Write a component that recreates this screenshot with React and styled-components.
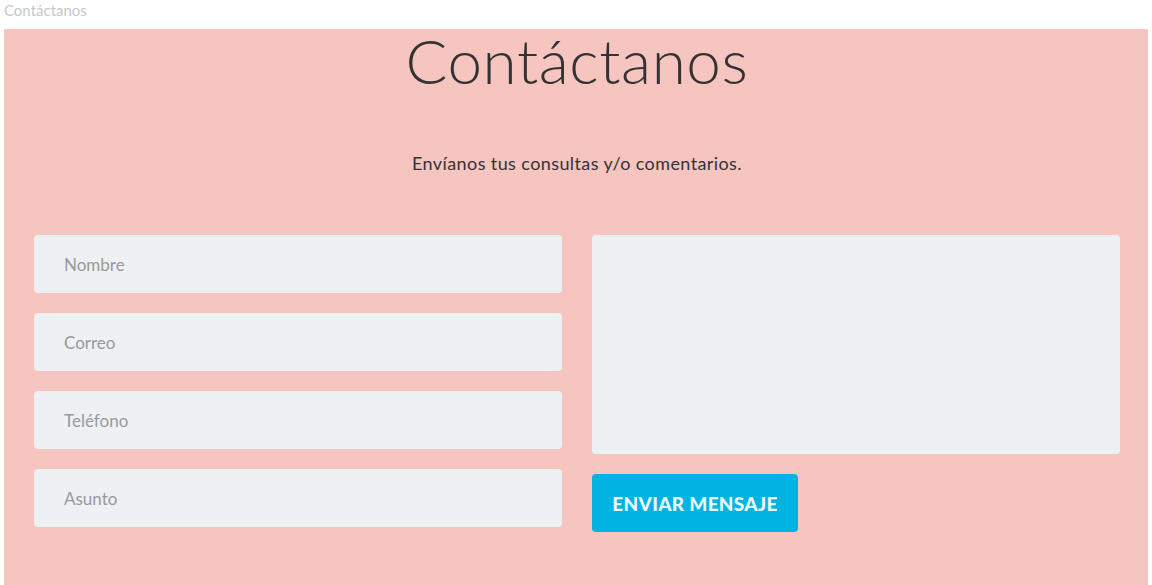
import styled, { createGlobalStyle } from "styled-components";

const GlobalStyle = createGlobalStyle`
  body {
    margin: 0;
    background: #fff;
    font-family: Lato, "Open Sans", sans-serif;
  }
  * { box-sizing: border-box; }
`;

const Page = styled.div`
  padding: 0 4px;
`;

const TopLabel = styled.div`
  font-size: 15px;
  line-height: 20px;
  color: #c8c8c8;
  margin-bottom: 9px;
`;

const Section = styled.section`
  background-color: #f6c5c0;
  padding: 0 28px 52px 30px;
  min-height: 556px;
`;

const Title = styled.h1`
  margin: 0;
  text-align: center;
  font-size: 62px;
  font-weight: 300;
  line-height: 62px;
  color: #333;
  letter-spacing: 0.6px;
`;

const Subtitle = styled.p`
  margin: 60px 0 0;
  text-align: center;
  font-size: 18px;
  line-height: 24px;
  letter-spacing: 0.4px;
  color: #333;
`;

const Form = styled.form`
  margin-top: 60px;
  display: grid;
  grid-template-columns: 528px 528px;
  column-gap: 30px;
  align-items: start;
`;

const Column = styled.div`
  display: flex;
  flex-direction: column;
  gap: 20px;
`;

const Field = styled.input`
  height: 58px;
  border: none;
  border-radius: 4px;
  background: #eef1f4;
  padding: 0 30px;
  font-family: Lato, sans-serif;
  font-size: 17px;
  color: #333;
  outline: none;

  &::placeholder {
    color: #999;
  }
`;

const Message = styled.textarea`
  height: 219px;
  border: none;
  border-radius: 4px;
  background: #eef1f4;
  resize: none;
  outline: none;
`;

const SendButton = styled.button`
  align-self: flex-start;
  width: 206px;
  height: 58px;
  border: none;
  border-radius: 4px;
  background: #00b3e3;
  color: #e8f9ff;
  font-family: Lato, sans-serif;
  font-weight: 900;
  font-size: 19px;
  letter-spacing: 0.3px;
`;

const fields = ["Nombre", "Correo", "Teléfono", "Asunto"];

function App() {
  return (
    <>
      <GlobalStyle />
      <Page>
        <TopLabel>Contáctanos</TopLabel>
        <Section>
          <Title>Contáctanos</Title>
          <Subtitle>Envíanos tus consultas y/o comentarios.</Subtitle>
          <Form onSubmit={(e) => e.preventDefault()}>
            <Column>
              {fields.map((f) => (
                <Field key={f} placeholder={f} />
              ))}
            </Column>
            <Column>
              <Message />
              <SendButton type="submit">ENVIAR MENSAJE</SendButton>
            </Column>
          </Form>
        </Section>
      </Page>
    </>
  );
}

export default App;
